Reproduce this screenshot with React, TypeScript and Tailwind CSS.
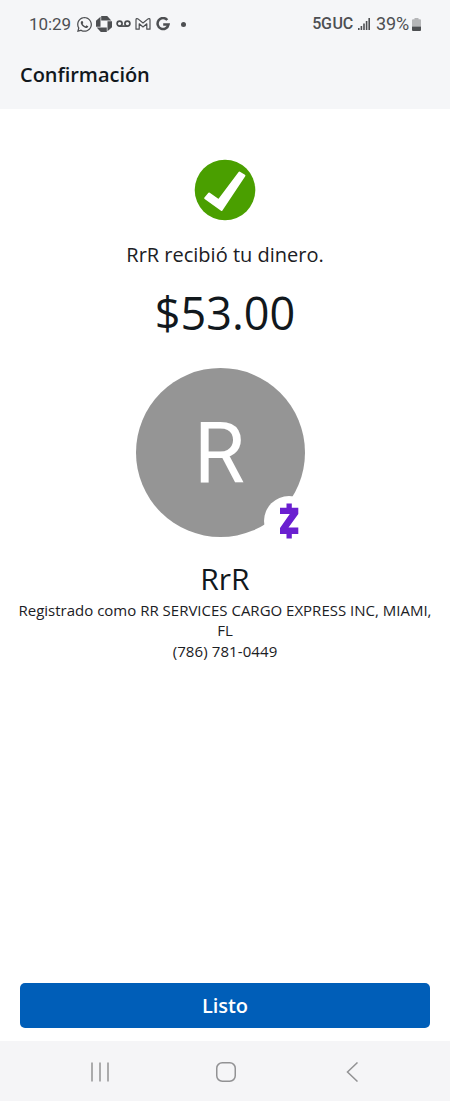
import { FaWhatsapp } from 'react-icons/fa'

function StatusBar() {
  return (
    <div className="flex h-12 items-center pl-[29px] pr-[29px] font-[Roboto,sans-serif] text-[#4d4f52]">
      <span className="w-[47px] whitespace-nowrap text-[17px] leading-none tracking-[-0.1px]">10:29</span>
      <FaWhatsapp className="h-[17px] w-[17px] shrink-0" />
      <svg className="ml-[3px] h-4 w-4 shrink-0" viewBox="0 0 16 16" fill="currentColor">
        <path d="M5.200 0h6l4.100 4.500H5.200zM16 5.200v6l-4.500 4.100V5.200zM10.800 16h-6L.7 11.500h10.100zM0 10.800v-6L4.500.700v10.100z" />
      </svg>
      <svg className="ml-1 h-4 w-[15px] shrink-0" viewBox="0 0 15 16" fill="none" stroke="currentColor" strokeWidth="1.7">
        <circle cx="3.6" cy="7.6" r="2.5" />
        <circle cx="11.4" cy="7.6" r="2.5" />
        <path d="M3.6 10.100h7.800" />
      </svg>
      <svg className="ml-1 h-4 w-4 shrink-0" viewBox="0 0 16 16" fill="none" stroke="currentColor" strokeWidth="1.2" strokeLinejoin="round">
        <path d="M1 13.200V3.800c0-1.300 1.200-1.500 2-.900l5 4.100 5-4.100c.8-.6 2-.4 2 .900v9.400h-3.200V7.800L8 11 4.200 7.800v5.400z" />
      </svg>
      <svg className="ml-[5px] h-[14px] w-[14px] shrink-0" viewBox="0 0 14 14" fill="none" stroke="currentColor" strokeWidth="2.5">
        <path d="M11.300 3A5.500 5.500 0 1 0 12.500 7.500H7.200" />
      </svg>
      <span className="ml-[11px] h-[5px] w-[5px] shrink-0 rounded-full bg-[#4d4f52]" />

      <span className="ml-auto flex gap-px whitespace-nowrap text-[16px] font-medium leading-none tracking-[-0.3px]">
        <span>5G</span>
        <span>UC</span>
      </span>
      <svg className="ml-[5px] h-3 w-3 shrink-0" viewBox="0 0 12 12" fill="currentColor">
        <path d="M0 10h1.600v2H0zM2.600 8h1.600v4H2.600zM5.200 5.500h1.600V12H5.200zM7.800 3h1.600v9H7.800zM10.400 0H12v12h-1.600z" />
      </svg>
      <span className="ml-[6px] whitespace-nowrap text-[18px] leading-none tracking-[-0.1px]">39%</span>
      <svg className="ml-[3px] h-[13px] w-[9px] shrink-0" viewBox="0 0 9 13">
        <path d="M2.500 0h4v1.200H8A1 1 0 0 1 9 2.200V8.500H0V2.200a1 1 0 0 1 1-1h1.500z" fill="#b5b6b8" />
        <path d="M0 8.500h9V12a1 1 0 0 1-1 1H1a1 1 0 0 1-1-1z" fill="#4d4f52" />
      </svg>
    </div>
  )
}

function Avatar() {
  return (
    <div className="relative mr-[9px] mt-[26.5px] h-[169px] w-[169px]">
      <div className="flex h-full w-full items-center justify-center rounded-full bg-[#959595] pr-[2px] pt-[3px] font-[Roboto,sans-serif] text-[86px] leading-none text-white">
        <span className="scale-x-[0.96]">R</span>
      </div>
      <div className="absolute left-[128px] top-[128px] flex h-[50px] w-[50px] items-center justify-center rounded-full bg-white">
        <svg className="h-9 w-5" viewBox="0 0 20 36" fill="#6a1fd0">
          <path d="M7.500.500h5.300v4.200h6.500V11L9.500 24.500h9.800v6.600h-6.500v4.400H7.500v-4.400H1v-6.200L10.800 11H1V4.700h6.500z" />
        </svg>
      </div>
    </div>
  )
}

function NavBar() {
  return (
    <div className="flex h-[60px] items-center bg-[#f5f5f7] pl-[90px] pt-[2px] text-[#929294]">
      <svg className="h-5 w-5" viewBox="0 0 20 20" stroke="currentColor" strokeWidth="1.5">
        <path d="M2 0.500v19M10 0.500v19M18 0.500v19" />
      </svg>
      <svg className="ml-[106px] h-5 w-5" viewBox="0 0 20 20" fill="none" stroke="currentColor" strokeWidth="1.5">
        <rect x="0.750" y="0.750" width="18.500" height="18.500" rx="5.500" />
      </svg>
      <svg className="ml-[110px] h-5 w-3" viewBox="0 0 12 20" fill="none" stroke="currentColor" strokeWidth="1.5">
        <path d="M11.500 0.500L1.500 10l10 9.500" />
      </svg>
    </div>
  )
}

export default function App() {
  return (
    <div className="flex h-[1101px] w-[450px] flex-col bg-white font-['Open_Sans',sans-serif] text-[#1b2024]">
      <header className="h-[109px] bg-[#f5f6f8]">
        <StatusBar />
        <h1 className="pl-5 pt-[13px] text-[20px] font-semibold leading-[28px] tracking-[-0.03px] text-[#11181d]">Confirmación</h1>
      </header>

      <main className="flex flex-1 flex-col items-center">
        <svg className="mt-[50px] h-[62px] w-[62px]" viewBox="0 0 62 62">
          <circle cx="31" cy="31" r="30.300" fill="#4a9f00" />
          <path d="M15.200 34.500l9.600 6.700L45.400 13.500l5 3.200L27.600 51 11.200 39.200z" fill="white" stroke="white" strokeWidth="2" strokeLinejoin="round" />
        </svg>
        <p className="mt-5 whitespace-nowrap text-[20px] leading-7">RrR recibió tu dinero.</p>
        <p className="mt-4 text-[45px] leading-[56px] text-[#11181d]">$53.00</p>
        <Avatar />
        <h2 className="mt-[22.5px] text-[30px] leading-10 text-[#11181d]">RrR</h2>
        <div className="w-[430px] pt-px text-center text-[15px] leading-[21px]">
          <p className="leading-[20px]">
            Registrado como RR SERVICES CARGO EXPRESS INC, MIAMI,
            <br />
            FL
          </p>
          <p className="pt-px tracking-[0.1px]">(786) 781-0449</p>
        </div>
      </main>

      <footer className="px-5 pb-[13px]">
        <button className="h-[45px] w-full rounded-[5px] bg-[#005eb8] text-[20px] font-semibold tracking-[-0.1px] text-white">Listo</button>
      </footer>
      <NavBar />
    </div>
  )
}
